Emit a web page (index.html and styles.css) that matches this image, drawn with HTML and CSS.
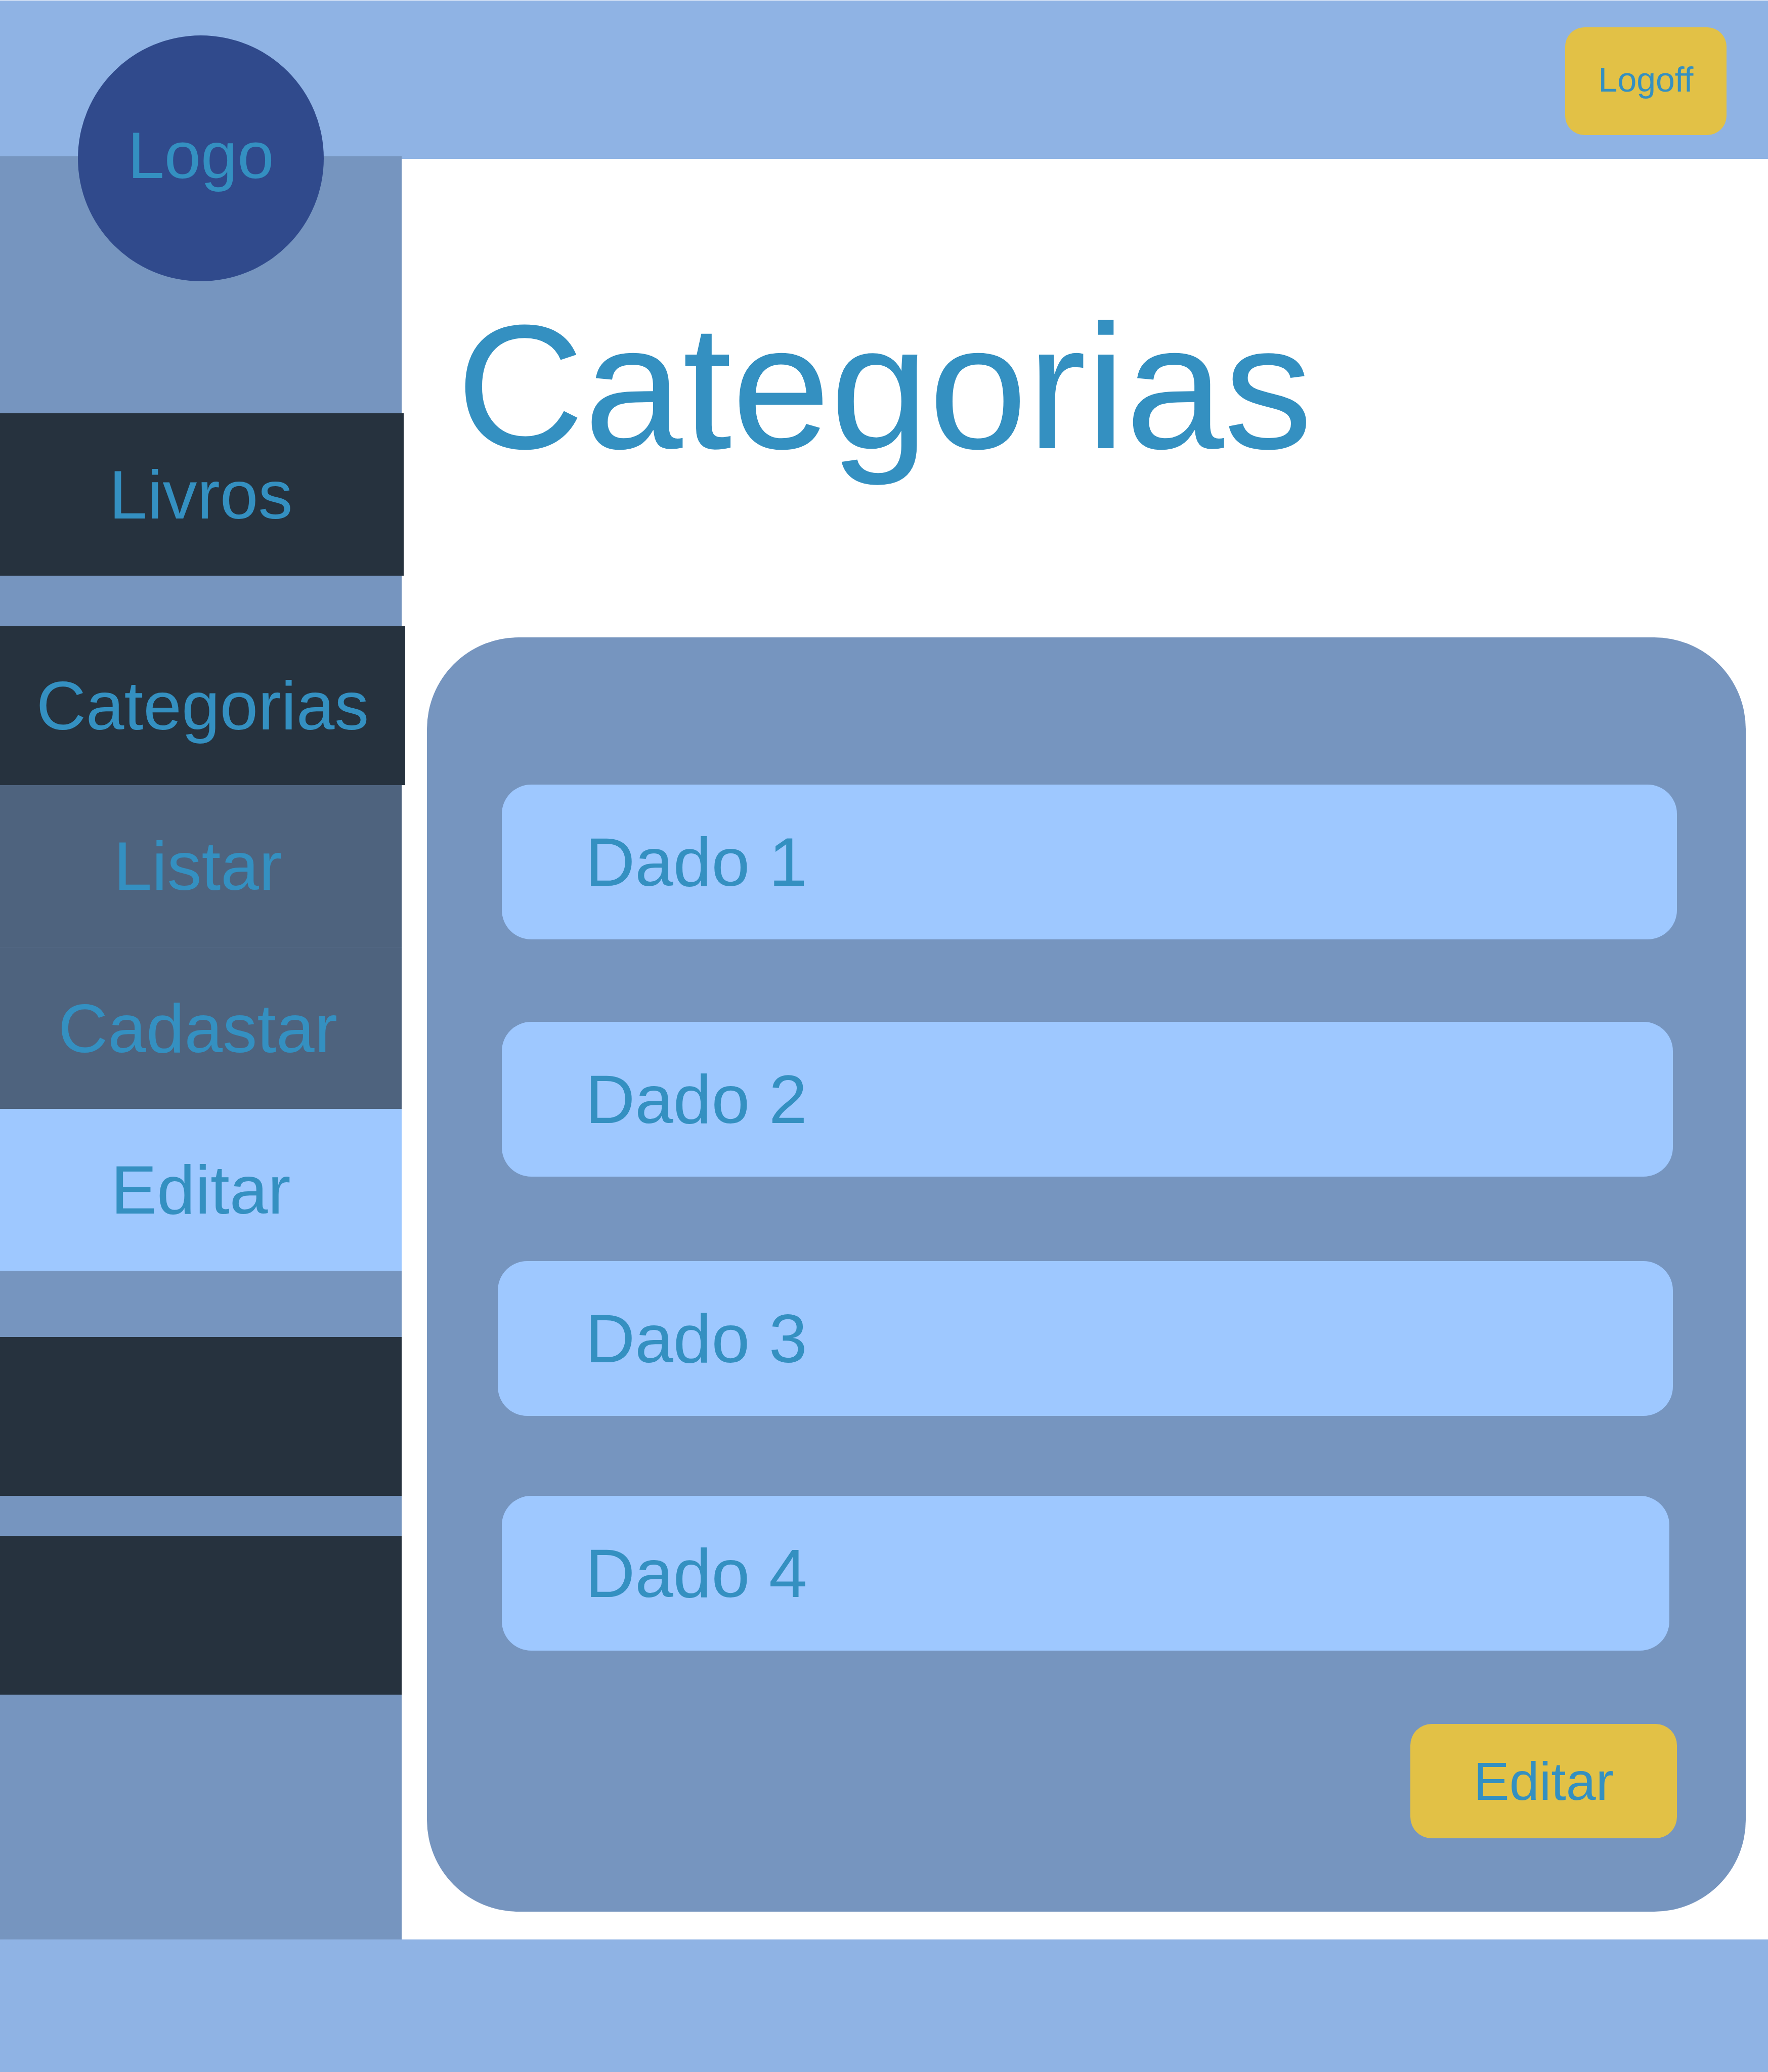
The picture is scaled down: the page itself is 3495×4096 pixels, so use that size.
FILE: index.html
```html
<!DOCTYPE html>
<html lang="pt-BR">
<head>
<meta charset="utf-8">
<meta name="viewport" content="width=device-width, initial-scale=1">
<title>Categorias</title>
<link rel="stylesheet" href="styles.css">
</head>
<body>
<header class="topbar">
  <a class="logo" href="#">Logo</a>
  <button class="btn btn-logoff" type="button">Logoff</button>
</header>
<div class="layout">
  <nav class="sidebar">
    <a class="menu-item menu-item-livros" href="#">Livros</a>
    <div class="menu-group">
      <a class="menu-item menu-item-open" href="#">Categorias</a>
      <a class="submenu-item" href="#">Listar</a>
      <a class="submenu-item submenu-item-ruled" href="#">Cadastar</a>
      <a class="submenu-item submenu-item-active" href="#" aria-current="page">Editar</a>
    </div>
    <div class="menu-slot"></div>
    <div class="menu-slot"></div>
  </nav>
  <main class="content">
    <h1 class="title">Categorias</h1>
    <section class="panel">
      <ul class="records">
        <li class="record">Dado 1</li>
        <li class="record record-short">Dado 2</li>
        <li class="record record-outset">Dado 3</li>
        <li class="record record-shorter">Dado 4</li>
      </ul>
      <button class="btn btn-edit" type="button">Editar</button>
    </section>
  </main>
</div>
<footer class="footer"></footer>
</body>
</html>
```
FILE: styles.css
```css
:root {
  --bar: #8fb3e4;
  --panel: #7695bf;
  --dark: #26323e;
  --submenu: #4e637e;
  --submenu-rule: #546a86;
  --light: #9ec8ff;
  --gold: #e2c146;
  --navy: #304a8c;
  --text: #3490c1;
}

* {
  box-sizing: border-box;
}

body {
  margin: 0;
  min-height: 100vh;
  display: flex;
  flex-direction: column;
  background: #fff;
  color: var(--text);
  font-family: "Liberation Sans", Arial, sans-serif;
  font-size: 136px;
  line-height: 1;
}

a {
  color: inherit;
  text-decoration: none;
}

.topbar {
  height: 314px;
  border-top: 1px solid #fff;
  padding: 53px 82px 0 154px;
  display: flex;
  justify-content: space-between;
  align-items: flex-start;
  background: var(--bar);
}

/* The logo hangs over the sidebar below the bar. */
.logo {
  position: relative;
  z-index: 1;
  width: 486px;
  height: 486px;
  margin-top: 16px;
  padding-bottom: 12px;
  display: flex;
  align-items: center;
  justify-content: center;
  border-radius: 50%;
  background: var(--navy);
  font-size: 130px;
}

.btn {
  border: 0;
  padding: 0;
  background: var(--gold);
  color: inherit;
  font-family: inherit;
  line-height: 1;
  cursor: pointer;
}

.btn-logoff {
  width: 319px;
  height: 213px;
  padding-bottom: 8px;
  border-radius: 38px;
  font-size: 68px;
}

.btn-edit {
  width: 527px;
  height: 226px;
  border-radius: 42px;
  font-size: 106px;
}

.layout {
  display: grid;
  grid-template-columns: 794px 1fr;
}

.sidebar {
  margin-top: -5px;
  padding-top: 508px;
  background: var(--panel);
}

.menu-item,
.submenu-item {
  display: flex;
  align-items: center;
  justify-content: center;
}

.menu-item {
  background: var(--dark);
}

.menu-item-livros {
  width: 798px;
  height: 321px;
  margin-bottom: 100px;
  padding-right: 4px;
}

.menu-item-open {
  width: 801px;
  height: 314px;
}

.submenu-item {
  height: 320px;
  padding-right: 12px;
  background: var(--submenu);
}

.submenu-item-ruled {
  border-top: 1px solid var(--submenu-rule);
}

.submenu-item-active {
  padding-right: 0;
  background: var(--light);
}

.menu-group {
  margin-bottom: 131px;
}

.menu-slot {
  height: 314px;
  margin-bottom: 79px;
  background: var(--dark);
}

.content {
  padding: 276px 44px 55px 50px;
}

.title {
  margin: 0 0 320px 58px;
  font-size: 350px;
  font-weight: 400;
  line-height: 350px;
}

.panel {
  padding: 291px 136px 145px 148px;
  display: flex;
  flex-direction: column;
  align-items: flex-end;
  gap: 145px;
  border-radius: 181px;
  background: var(--panel);
}

.records {
  width: 100%;
  margin: 0;
  padding: 0;
  display: grid;
  gap: 158px;
  list-style: none;
}

.record {
  height: 306px;
  padding-left: 165px;
  display: flex;
  align-items: center;
  border-radius: 58px;
  background: var(--light);
}

.record-short {
  margin: 5px 8px 0 0;
}

.record-outset {
  margin: 9px 8px 0 -8px;
  padding-left: 173px;
}

.record-shorter {
  margin-right: 15px;
}

.footer {
  flex: 1;
  min-height: 262px;
  background: var(--bar);
}
```
